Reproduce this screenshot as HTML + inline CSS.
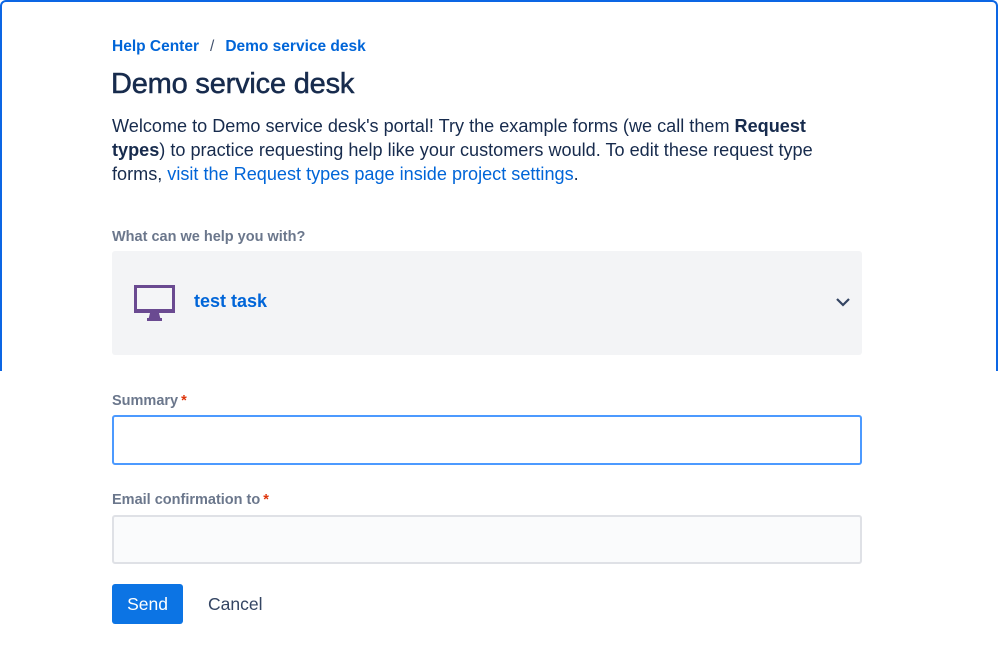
<!DOCTYPE html>
<html><head><meta charset="utf-8"><style>
*{box-sizing:border-box;margin:0;padding:0}
body{width:998px;height:664px;background:#fff;font-family:"Liberation Sans",sans-serif;position:relative;overflow:hidden;color:#172b4d}
.frame{position:absolute;left:0;top:0;width:998px;height:371px;border:2px solid #0c66e4;border-bottom:none;border-radius:6px 6px 0 0}
.a{position:absolute;white-space:nowrap}
.link{color:#0065d8}
.lbl{font-size:14.5px;font-weight:bold;color:#6b778c}
.star{color:#de350b;margin-left:3px}
.box{position:absolute;left:112px;width:750px;border-radius:3px}
</style></head><body>
<div class="frame"></div>
<div class="a" style="left:112px;top:38px;font-size:15.5px;font-weight:bold"><span class="link">Help Center</span><span style="color:#42526e;font-weight:normal;margin:0 11px">/</span><span class="link">Demo service desk</span></div>
<div class="a" style="left:111px;top:68px;font-size:29px;letter-spacing:-0.2px;color:#172b4d;-webkit-text-stroke:0.5px #172b4d">Demo service desk</div>
<div class="a" style="left:112px;top:114px;font-size:18.1px;line-height:24px;color:#172b4d">Welcome to Demo service desk's portal! Try the example forms (we call them <b>Request</b><br><b>types</b>) to practice requesting help like your customers would. To edit these request type<br>forms, <span class="link">visit the Request types page inside project settings</span>.</div>
<div class="a lbl" style="left:112px;top:229px">What can we help you with?</div>
<div class="box" style="top:251px;height:104px;background:#f3f4f6"></div>
<svg class="a" style="left:134px;top:285px" width="41" height="37" viewBox="0 0 41 37"><rect x="1.5" y="1.5" width="38" height="25" fill="#f4f5f7" stroke="#6a4a91" stroke-width="3"/><rect x="0" y="24" width="41" height="4" fill="#6a4a91"/><path d="M16 28h9l1.5 6h-12z" fill="#6a4a91"/><rect x="13" y="33" width="15" height="3" fill="#6a4a91"/></svg>
<div class="a link" style="left:194px;top:291px;font-size:18px;font-weight:bold">test task</div>
<svg class="a" style="left:835px;top:296px" width="16" height="12" viewBox="0 0 16 12"><path d="M2 3l6 6 6-6" fill="none" stroke="#344563" stroke-width="2.2"/></svg>
<div class="a lbl" style="left:112px;top:393px">Summary<span class="star">*</span></div>
<div class="box" style="top:415px;height:50px;border:2px solid #4c9aff;background:#fff"></div>
<div class="a lbl" style="left:112px;top:492px">Email confirmation to<span class="star">*</span></div>
<div class="box" style="top:515px;height:49px;border:2px solid #dfe1e6;background:#fafbfc"></div>
<div class="a" style="left:112px;top:584px;width:71px;height:40px;background:#0c74e4;border-radius:3px;color:#fff;font-size:17.5px;text-align:center;line-height:40px">Send</div>
<div class="a" style="left:208px;top:594px;font-size:17.5px;color:#344563">Cancel</div>
</body></html>
